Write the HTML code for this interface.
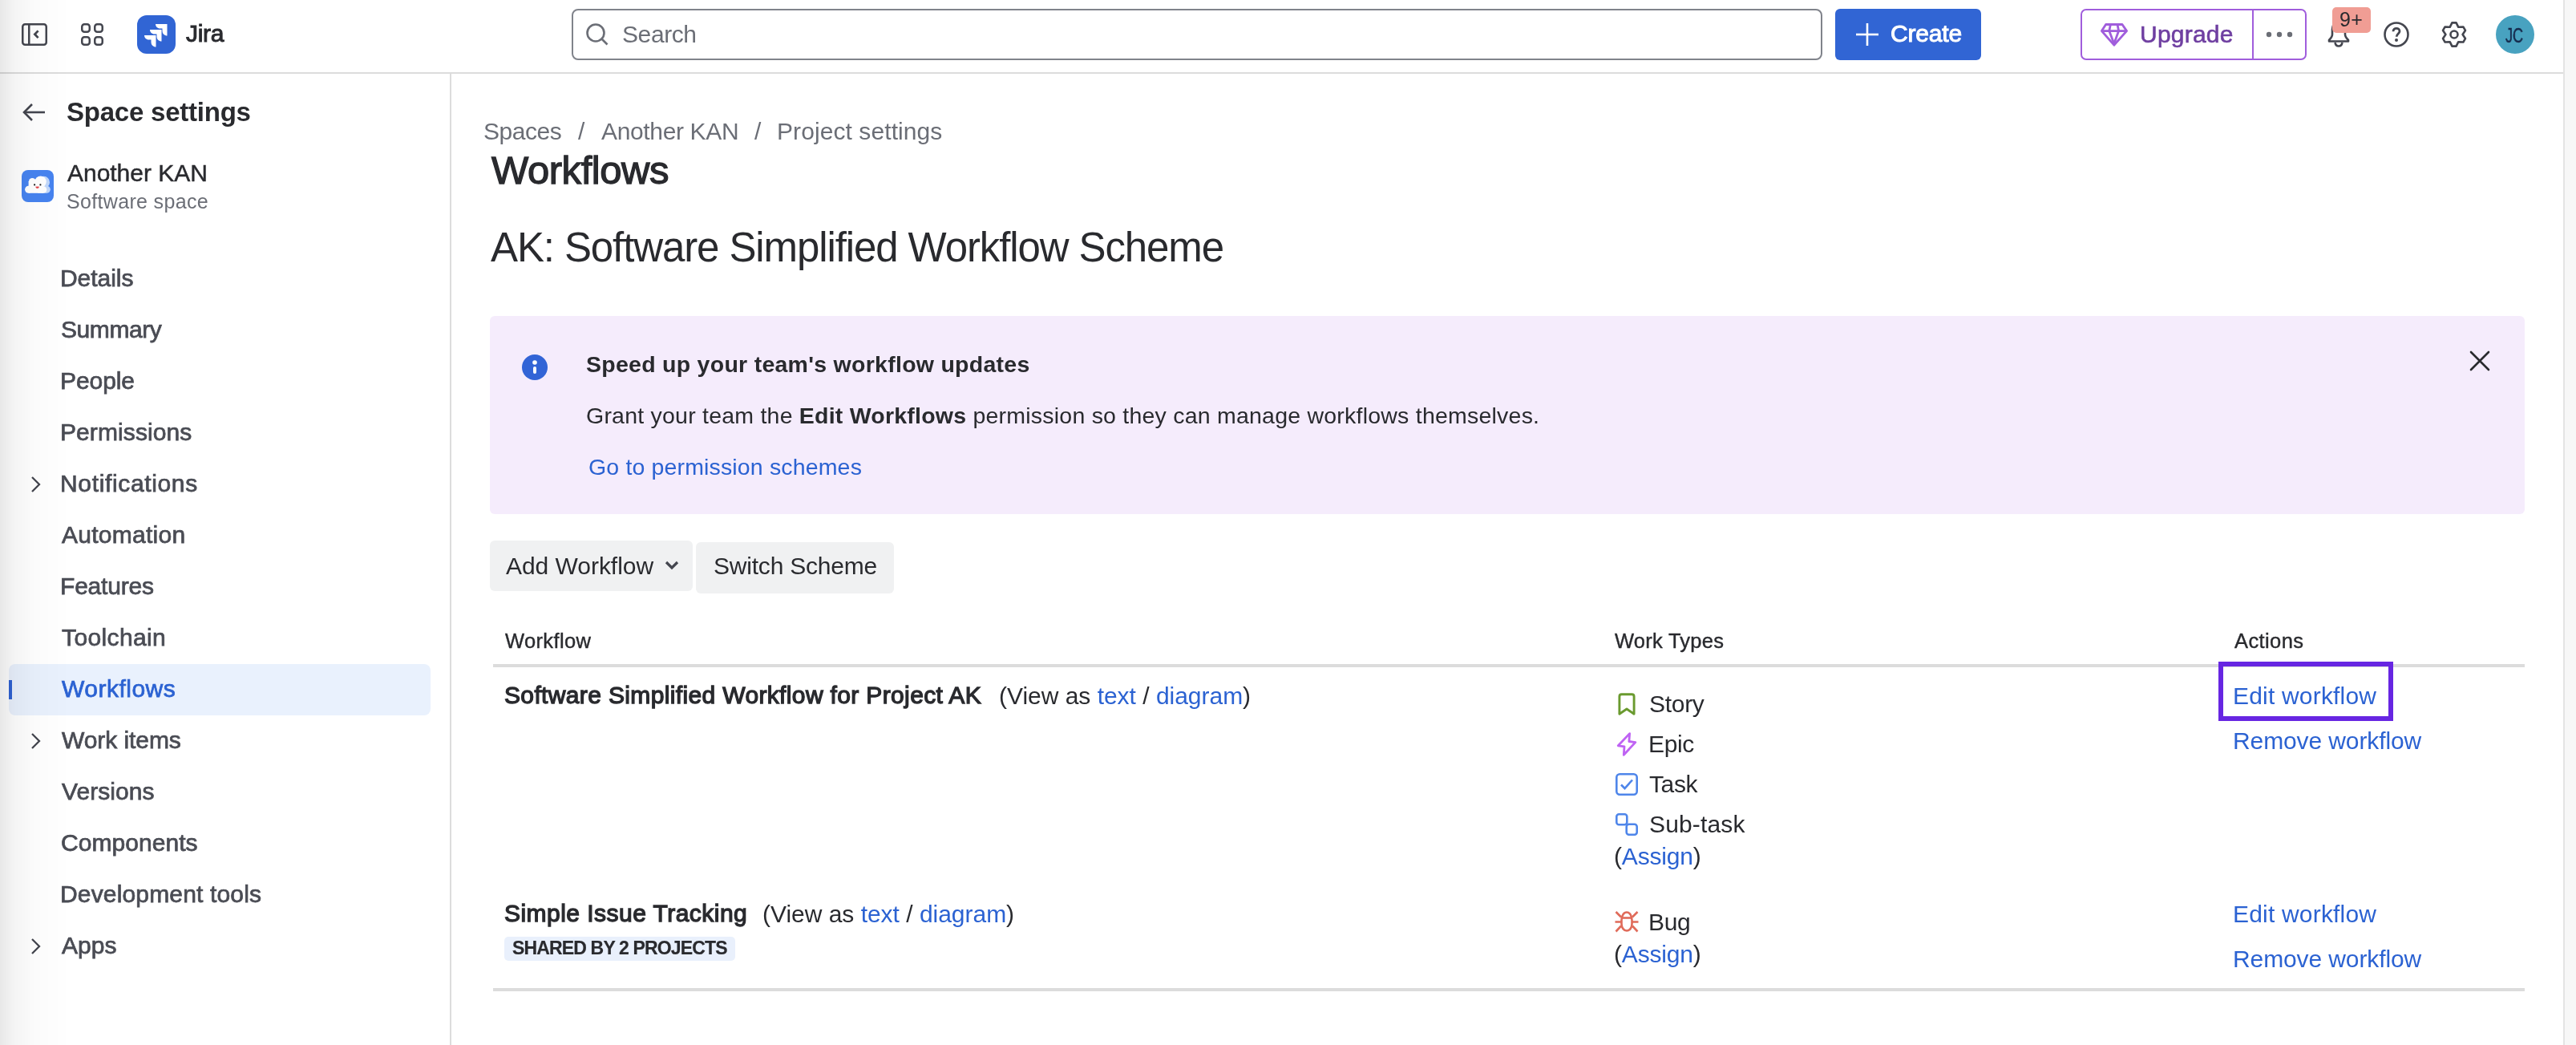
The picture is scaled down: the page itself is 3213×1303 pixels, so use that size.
<!DOCTYPE html>
<html><head><meta charset="utf-8"><title>Workflows</title>
<style>
html,body{margin:0;padding:0;width:3213px;height:1303px;overflow:hidden;background:#fff;}
body{position:relative;font-family:'Liberation Sans', sans-serif;}
.t{position:absolute;white-space:nowrap;will-change:transform;}
.t b{font-weight:700;}
#shade{position:absolute;left:0;top:0;width:88px;height:1303px;background:linear-gradient(to right, rgba(0,0,0,0.09), rgba(0,0,0,0.045) 20%, rgba(0,0,0,0.015) 50%, rgba(0,0,0,0) 100%);pointer-events:none;}
</style></head><body>
<div style="position:absolute;left:0;top:90px;width:3197px;height:2px;background:#dcdcdc"></div>
<svg style="position:absolute;left:25px;top:27px" width="36" height="32" viewBox="0 0 36 32">
<rect x="3.25" y="3.25" width="29.5" height="25.5" rx="3" fill="none" stroke="#44464f" stroke-width="2.5"/>
<line x1="11.25" y1="3" x2="11.25" y2="29" stroke="#44464f" stroke-width="2.5"/>
<polyline points="22.6,11.4 18.4,15.75 22.6,20.1" fill="none" stroke="#44464f" stroke-width="2.8" stroke-linecap="butt" stroke-linejoin="miter"/>
</svg>
<svg style="position:absolute;left:99px;top:27px" width="32" height="32" viewBox="0 0 32 32">
<g fill="none" stroke="#44464f" stroke-width="2.5">
<rect x="3.25" y="3.25" width="9.5" height="9.5" rx="3"/><rect x="19.25" y="3.25" width="9.5" height="9.5" rx="3"/>
<rect x="3.25" y="19.25" width="9.5" height="9.5" rx="3"/><rect x="19.25" y="19.25" width="9.5" height="9.5" rx="3"/>
</g></svg>
<svg style="position:absolute;left:171px;top:19px" width="48" height="48" viewBox="0 0 48 48">
<rect width="48" height="48" rx="12" fill="#3165d4"/>
<g fill="#fff">
<path d="M23 11 H37.5 V25.5 C34 25.5 31.5 23 31.5 19.5 V16.5 H28.5 C25.5 16.5 23 14 23 11 Z"/>
<path d="M16 18 H30.5 V32.5 C27 32.5 24.5 30 24.5 26.5 V23.5 H21.5 C18.5 23.5 16 21 16 18 Z"/>
<path d="M9 25 H23.5 V39.5 C20 39.5 17.5 37 17.5 33.5 V30.5 H14.5 C11.5 30.5 9 28 9 25 Z"/>
</g></svg>
<div class="t" style="left:232.00px;top:27px;font-size:30px;line-height:30px;color:#292a2e;letter-spacing:-0.333px;-webkit-text-stroke:1.0px #292a2e;">Jira</div>
<div style="position:absolute;left:713px;top:11px;width:1556px;height:60px;border:2px solid #80838b;border-radius:8px"></div>
<svg style="position:absolute;left:729px;top:27px" width="32" height="32" viewBox="0 0 32 32">
<circle cx="14" cy="14" r="10.5" fill="none" stroke="#6b6e76" stroke-width="2.6"/>
<line x1="21.5" y1="21.5" x2="28.5" y2="28.5" stroke="#6b6e76" stroke-width="2.6"/>
</svg>
<div class="t" style="left:776.00px;top:28px;font-size:30px;line-height:30px;color:#6b6e76;letter-spacing:-0.400px;">Search</div>
<div style="position:absolute;left:2289px;top:11px;width:182px;height:64px;background:#3165d4;border-radius:6px"></div>
<svg style="position:absolute;left:2313px;top:27px" width="32" height="32" viewBox="0 0 32 32">
<line x1="16" y1="2" x2="16" y2="30" stroke="#fff" stroke-width="2.6"/><line x1="2" y1="16" x2="30" y2="16" stroke="#fff" stroke-width="2.6"/>
</svg>
<div class="t" style="left:2357.50px;top:27px;font-size:30px;line-height:30px;color:#ffffff;letter-spacing:-0.180px;-webkit-text-stroke:1.0px #ffffff;">Create</div>
<div style="position:absolute;left:2595px;top:11px;width:278px;height:60px;border:2px solid #a05ddc;border-radius:7px"></div>
<div style="position:absolute;left:2809px;top:11px;width:2px;height:64px;background:#a05ddc"></div>
<svg style="position:absolute;left:2619px;top:27px" width="36" height="32" viewBox="0 0 36 32">
<g fill="none" stroke="#a05ddc" stroke-width="2.8" stroke-linejoin="round">
<path d="M7.6 3.5 H28 L33.6 11.6 L17.8 29.2 L2.4 11.6 Z"/><path d="M2.4 11.6 H33.6"/><path d="M13.4 3.5 L11.8 11.6 L17.8 27.5 L23.6 11.6 L22 3.5"/>
</g></svg>
<div class="t" style="left:2668.60px;top:28px;font-size:30px;line-height:30px;color:#6f3fa1;letter-spacing:0.233px;-webkit-text-stroke:0.6px #6f3fa1;">Upgrade</div>
<svg style="position:absolute;left:2822px;top:36px" width="40" height="14" viewBox="0 0 40 14">
<circle cx="8" cy="7" r="3.2" fill="#6b6e76"/><circle cx="21" cy="7" r="3.2" fill="#6b6e76"/><circle cx="34" cy="7" r="3.2" fill="#6b6e76"/>
</svg>
<svg style="position:absolute;left:2901px;top:22px" width="32" height="38" viewBox="0 0 32 38">
<path d="M16 5.5 C11 5.5 8 9.5 8 14.5 V21 C8 23.5 6.5 25.5 4 28 V29.5 H28 V28 C25.5 25.5 24 23.5 24 21 V14.5 C24 9.5 21 5.5 16 5.5 Z" fill="none" stroke="#44464f" stroke-width="2.6" stroke-linejoin="round"/>
<path d="M11.5 31 C12 34 14 35.5 16 35.5 C18 35.5 20 34 20.5 31" fill="none" stroke="#44464f" stroke-width="2.6"/>
</svg>
<div style="position:absolute;left:2909px;top:9px;width:48px;height:32px;background:#f09d94;border-radius:5px"></div>
<div class="t" style="left:2917.60px;top:12px;font-size:25px;line-height:25px;color:#292a2e;letter-spacing:0.400px;">9+</div>
<svg style="position:absolute;left:2971px;top:25px" width="36" height="36" viewBox="0 0 36 36">
<circle cx="18" cy="18" r="14.5" fill="none" stroke="#44464f" stroke-width="2.6"/>
<path d="M14 14.2 C14 11.8 15.8 10.3 18 10.3 C20.3 10.3 22 11.9 22 14 C22 16.9 18.2 17.1 18.2 20.7" fill="none" stroke="#44464f" stroke-width="2.8"/>
<circle cx="18" cy="24.9" r="2" fill="#44464f"/>
</svg>
<svg style="position:absolute;left:3043px;top:25px" width="36" height="36" viewBox="0 0 36 36">
<path d="M15.40 3.40 L20.60 3.40 L23.30 8.82 L29.34 8.45 L31.94 12.95 L28.60 18.00 L31.94 23.05 L29.34 27.55 L23.30 27.18 L20.60 32.60 L15.40 32.60 L12.70 27.18 L6.66 27.55 L4.06 23.05 L7.40 18.00 L4.06 12.95 L6.66 8.45 L12.70 8.82 Z" fill="none" stroke="#44464f" stroke-width="2.6" stroke-linejoin="round"/>
<circle cx="18" cy="18" r="4.5" fill="none" stroke="#44464f" stroke-width="2.6"/>
</svg>
<div style="position:absolute;left:3113px;top:19px;width:48px;height:48px;border-radius:50%;background:#48a2c0"></div>
<div class="t " style="left:3125px;top:32px;font-size:25px;line-height:25px;color:#172b4d;transform:scaleX(0.72);transform-origin:0 0;-webkit-text-stroke:0.5px #172b4d;">JC</div>
<div style="position:absolute;left:3197px;top:0;width:2px;height:1303px;background:#e4e4e4"></div>
<div style="position:absolute;left:3199px;top:0;width:14px;height:1303px;background:#f7f7f7"></div>
<div style="position:absolute;left:561px;top:92px;width:2px;height:1211px;background:#dcdcdc"></div>
<svg style="position:absolute;left:27px;top:126px" width="32" height="28" viewBox="0 0 32 28">
<path d="M4 14 H29" stroke="#44464f" stroke-width="2.6"/><polyline points="13,4 3,14 13,24" fill="none" stroke="#44464f" stroke-width="2.6" stroke-linejoin="miter"/>
</svg>
<div class="t" style="left:83.00px;top:123px;font-size:33px;line-height:33px;color:#292a2e;font-weight:700;letter-spacing:-0.231px;">Space settings</div>
<svg style="position:absolute;left:27px;top:212px" width="40" height="40" viewBox="0 0 40 40">
<rect width="40" height="40" rx="8" fill="#4784f0"/>
<g fill="#c3d9fb"><circle cx="27.6" cy="15.2" r="7.4"/><circle cx="31.3" cy="24.3" r="4.5"/><rect x="20" y="19.5" width="11.5" height="9.3"/></g>
<g fill="#fff"><circle cx="13.3" cy="14.3" r="4.4"/><circle cx="23.6" cy="14.6" r="7.2"/><circle cx="8.6" cy="24.3" r="4.5"/><circle cx="27" cy="24.5" r="4.3"/><rect x="8.6" y="19.8" width="18.4" height="9"/><rect x="8.6" y="14" width="10" height="10"/></g>
<circle cx="16.1" cy="18.4" r="1.1" fill="#222"/><circle cx="23.4" cy="18.4" r="1.1" fill="#222"/>
<path d="M17.2 20.7 Q19.6 20.1 22 20.7 Q21.5 23 19.6 23 Q17.7 23 17.2 20.7 Z" fill="#e5484d"/>
</svg>
<div class="t" style="left:84.00px;top:201px;font-size:30px;line-height:30px;color:#292a2e;letter-spacing:-0.030px;-webkit-text-stroke:0.45px #292a2e;">Another KAN</div>
<div class="t" style="left:83.00px;top:239px;font-size:25px;line-height:25px;color:#6b6e76;letter-spacing:0.331px;">Software space</div>
<div class="t" style="left:74.50px;top:332px;font-size:30px;line-height:30px;color:#4a4c54;letter-spacing:-0.042px;-webkit-text-stroke:0.75px #4a4c54;">Details</div>
<div class="t" style="left:75.50px;top:396px;font-size:30px;line-height:30px;color:#4a4c54;letter-spacing:-0.433px;-webkit-text-stroke:0.75px #4a4c54;">Summary</div>
<div class="t" style="left:74.50px;top:460px;font-size:30px;line-height:30px;color:#4a4c54;letter-spacing:-0.080px;-webkit-text-stroke:0.75px #4a4c54;">People</div>
<div class="t" style="left:74.50px;top:524px;font-size:30px;line-height:30px;color:#4a4c54;letter-spacing:0.090px;-webkit-text-stroke:0.75px #4a4c54;">Permissions</div>
<div class="t" style="left:74.50px;top:588px;font-size:30px;line-height:30px;color:#4a4c54;letter-spacing:0.650px;-webkit-text-stroke:0.75px #4a4c54;">Notifications</div>
<svg style="position:absolute;left:36px;top:593px" width="18" height="22" viewBox="0 0 18 22">
<polyline points="4,2 13,11 4,20" fill="none" stroke="#44464f" stroke-width="2.3"/></svg>
<div class="t" style="left:76.50px;top:652px;font-size:30px;line-height:30px;color:#4a4c54;letter-spacing:0.267px;-webkit-text-stroke:0.75px #4a4c54;">Automation</div>
<div class="t" style="left:74.50px;top:716px;font-size:30px;line-height:30px;color:#4a4c54;letter-spacing:-0.200px;-webkit-text-stroke:0.75px #4a4c54;">Features</div>
<div class="t" style="left:76.50px;top:780px;font-size:30px;line-height:30px;color:#4a4c54;letter-spacing:0.375px;-webkit-text-stroke:0.75px #4a4c54;">Toolchain</div>
<div style="position:absolute;left:11px;top:828px;width:526px;height:64px;background:#e9f1fd;border-radius:8px"></div>
<div style="position:absolute;left:11px;top:848px;width:4px;height:24px;background:#2f62d3"></div>
<div class="t" style="left:76.50px;top:844px;font-size:30px;line-height:30px;color:#2b62d2;letter-spacing:0.488px;-webkit-text-stroke:0.75px #2b62d2;">Workflows</div>
<div class="t" style="left:76.50px;top:908px;font-size:30px;line-height:30px;color:#4a4c54;letter-spacing:-0.067px;-webkit-text-stroke:0.75px #4a4c54;">Work items</div>
<svg style="position:absolute;left:36px;top:913px" width="18" height="22" viewBox="0 0 18 22">
<polyline points="4,2 13,11 4,20" fill="none" stroke="#44464f" stroke-width="2.3"/></svg>
<div class="t" style="left:76.50px;top:972px;font-size:30px;line-height:30px;color:#4a4c54;letter-spacing:0.071px;-webkit-text-stroke:0.75px #4a4c54;">Versions</div>
<div class="t" style="left:75.50px;top:1036px;font-size:30px;line-height:30px;color:#4a4c54;letter-spacing:0.056px;-webkit-text-stroke:0.75px #4a4c54;">Components</div>
<div class="t" style="left:74.50px;top:1100px;font-size:30px;line-height:30px;color:#4a4c54;letter-spacing:0.156px;-webkit-text-stroke:0.75px #4a4c54;">Development tools</div>
<div class="t" style="left:76.50px;top:1164px;font-size:30px;line-height:30px;color:#4a4c54;letter-spacing:0.067px;-webkit-text-stroke:0.75px #4a4c54;">Apps</div>
<svg style="position:absolute;left:36px;top:1169px" width="18" height="22" viewBox="0 0 18 22">
<polyline points="4,2 13,11 4,20" fill="none" stroke="#44464f" stroke-width="2.3"/></svg>
<div class="t" style="left:603.25px;top:149px;font-size:30px;line-height:30px;color:#6b6e76;letter-spacing:-0.450px;">Spaces</div>
<div class="t" style="left:721.00px;top:149px;font-size:30px;line-height:30px;color:#6b6e76;">/</div>
<div class="t" style="left:750.00px;top:149px;font-size:30px;line-height:30px;color:#6b6e76;letter-spacing:-0.350px;">Another KAN</div>
<div class="t" style="left:941.00px;top:149px;font-size:30px;line-height:30px;color:#6b6e76;">/</div>
<div class="t" style="left:968.50px;top:149px;font-size:30px;line-height:30px;color:#6b6e76;letter-spacing:0.083px;">Project settings</div>
<div class="t" style="left:613.00px;top:188px;font-size:49px;line-height:49px;color:#292a2e;letter-spacing:-0.438px;-webkit-text-stroke:1.3px #292a2e;">Workflows</div>
<div class="t" style="left:611.70px;top:283px;font-size:51px;line-height:51px;color:#292a2e;letter-spacing:-1.105px;">AK: Software Simplified Workflow Scheme</div>
<div style="position:absolute;left:611px;top:394px;width:2538px;height:247px;background:#f5ecfc;border-radius:6px"></div>
<svg style="position:absolute;left:651px;top:442px" width="32" height="32" viewBox="0 0 32 32">
<circle cx="16" cy="16" r="16" fill="#3264d6"/><circle cx="16" cy="10" r="2.8" fill="#fff"/><rect x="14" y="15" width="4" height="9" rx="2" fill="#fff"/>
</svg>
<div class="t" style="left:731.00px;top:440px;font-size:28.5px;line-height:28.5px;color:#292a2e;font-weight:700;letter-spacing:0.269px;">Speed up your team's workflow updates</div>
<div class="t" style="left:731.00px;top:504px;font-size:28.5px;line-height:28.5px;color:#292a2e;letter-spacing:0.224px;">Grant your team the <b>Edit Workflows</b> permission so they can manage workflows themselves.</div>
<div class="t" style="left:733.50px;top:568px;font-size:28.5px;line-height:28.5px;color:#2b62d2;letter-spacing:0.152px;">Go to permission schemes</div>
<svg style="position:absolute;left:3079px;top:436px" width="28" height="28" viewBox="0 0 28 28">
<path d="M3 3 L25 25 M25 3 L3 25" stroke="#292a2e" stroke-width="2.6" stroke-linecap="round"/>
</svg>
<div style="position:absolute;left:611px;top:674px;width:253px;height:63px;background:#f0f1f2;border-radius:6px"></div>
<div class="t" style="left:631.40px;top:691px;font-size:30px;line-height:30px;color:#292a2e;letter-spacing:-0.036px;">Add Workflow</div>
<svg style="position:absolute;left:828px;top:697px" width="20" height="16" viewBox="0 0 20 16">
<polyline points="3,4 10,11 17,4" fill="none" stroke="#44464f" stroke-width="3.2"/></svg>
<div style="position:absolute;left:868px;top:676px;width:247px;height:64px;background:#f0f1f2;border-radius:6px"></div>
<div class="t" style="left:890.25px;top:691px;font-size:30px;line-height:30px;color:#292a2e;letter-spacing:-0.208px;">Switch Scheme</div>
<div class="t" style="left:630.00px;top:787px;font-size:25.5px;line-height:25.5px;color:#292a2e;letter-spacing:0.357px;-webkit-text-stroke:0.4px #292a2e;">Workflow</div>
<div class="t" style="left:2013.50px;top:787px;font-size:25.5px;line-height:25.5px;color:#292a2e;letter-spacing:0.256px;-webkit-text-stroke:0.4px #292a2e;">Work Types</div>
<div class="t" style="left:2786.60px;top:787px;font-size:25.5px;line-height:25.5px;color:#292a2e;letter-spacing:0.400px;-webkit-text-stroke:0.4px #292a2e;">Actions</div>
<div style="position:absolute;left:615px;top:828px;width:2534px;height:4px;background:#dcdcdc"></div>
<div style="position:absolute;left:615px;top:1232px;width:2534px;height:4px;background:#dcdcdc"></div>
<div class="t" style="left:629.00px;top:852px;font-size:30px;line-height:30px;color:#292a2e;letter-spacing:0.357px;-webkit-text-stroke:1.3px #292a2e;">Software Simplified Workflow for Project AK</div>
<div class="t" style="left:1245.50px;top:853px;font-size:30px;line-height:30px;color:#292a2e;letter-spacing:-0.022px;">(View as <span style="color:#2b62d2">text</span> / <span style="color:#2b62d2">diagram</span>)</div>
<div class="t" style="left:2785.40px;top:853px;font-size:30px;line-height:30px;color:#2b62d2;letter-spacing:0.192px;">Edit workflow</div>
<div class="t" style="left:2785.00px;top:909px;font-size:30px;line-height:30px;color:#2b62d2;letter-spacing:-0.107px;">Remove workflow</div>
<div style="position:absolute;left:2767px;top:825px;width:206px;height:62px;border:6px solid #6726e2"></div>
<svg style="position:absolute;left:2015px;top:864px" width="28" height="28" viewBox="0 0 28 28">
<path d="M4.9 4.4 Q4.9 1.7 7.6 1.7 H20.4 Q23.1 1.7 23.1 4.4 V26.2 L14 20 L4.9 26.2 Z" fill="none" stroke="#6a9a2f" stroke-width="2.9" stroke-linejoin="round"/></svg>
<div class="t" style="left:2057.00px;top:863px;font-size:30px;line-height:30px;color:#292a2e;letter-spacing:-0.300px;">Story</div>
<svg style="position:absolute;left:2015px;top:912px" width="28" height="32" viewBox="0 0 28 32">
<path d="M17.6 2.6 L3.3 17.8 L11 18.9 L10.3 29.3 L24.8 13.6 L16.9 12.5 Z" fill="none" stroke="#bf63f3" stroke-width="2.8" stroke-linejoin="round"/></svg>
<div class="t" style="left:2056.00px;top:913px;font-size:30px;line-height:30px;color:#292a2e;letter-spacing:-0.367px;">Epic</div>
<svg style="position:absolute;left:2015px;top:964px" width="28" height="28" viewBox="0 0 28 28">
<rect x="1.3" y="1.3" width="25.4" height="25.4" rx="4" fill="none" stroke="#4f86ea" stroke-width="2.6"/>
<polyline points="7,14.5 11.5,19 21,8.5" fill="none" stroke="#4f86ea" stroke-width="2.6"/></svg>
<div class="t" style="left:2057.00px;top:963px;font-size:30px;line-height:30px;color:#292a2e;letter-spacing:-0.400px;">Task</div>
<svg style="position:absolute;left:2015px;top:1014px" width="28" height="28" viewBox="0 0 28 28">
<rect x="1.3" y="1.3" width="13" height="13" rx="3" fill="none" stroke="#4f86ea" stroke-width="2.6"/>
<rect x="13.7" y="13.7" width="13" height="13" rx="3" fill="none" stroke="#4f86ea" stroke-width="2.6"/></svg>
<div class="t" style="left:2057.00px;top:1013px;font-size:30px;line-height:30px;color:#292a2e;letter-spacing:0.143px;">Sub-task</div>
<div class="t" style="left:2013.00px;top:1053px;font-size:30px;line-height:30px;color:#292a2e;letter-spacing:-0.179px;">(<span style="color:#2b62d2">Assign</span>)</div>
<div class="t" style="left:628.50px;top:1124px;font-size:30px;line-height:30px;color:#292a2e;letter-spacing:0.465px;-webkit-text-stroke:1.3px #292a2e;">Simple Issue Tracking</div>
<div class="t" style="left:950.50px;top:1125px;font-size:30px;line-height:30px;color:#292a2e;letter-spacing:-0.022px;">(View as <span style="color:#2b62d2">text</span> / <span style="color:#2b62d2">diagram</span>)</div>
<div style="position:absolute;left:629px;top:1168px;width:288px;height:30px;background:#e9f0fc;border-radius:5px"></div>
<div class="t" style="left:638.75px;top:1171px;font-size:23px;line-height:23px;color:#292a2e;font-weight:700;letter-spacing:-0.842px;-webkit-text-stroke:0.2px #292a2e;">SHARED BY 2 PROJECTS</div>
<svg style="position:absolute;left:2014px;top:1135px" width="30" height="28" viewBox="0 0 30 28">
<g fill="none" stroke="#e06b5a" stroke-width="2.6">
<path d="M8.5 12.5 C8.5 6.5 11.5 2.5 15 2.5 C18.5 2.5 21.5 6.5 21.5 12.5 V17 C21.5 22 18.5 25.5 15 25.5 C11.5 25.5 8.5 22 8.5 17 Z"/>
<path d="M9 9.5 H21"/><path d="M0.5 14.5 H8.5 M21.5 14.5 H29.5"/>
<path d="M1.5 2 L8 8.5 M28.5 2 L22 8.5 M1.5 26.5 L8 19.5 M28.5 26.5 L22 19.5"/>
</g></svg>
<div class="t" style="left:2056.30px;top:1135px;font-size:30px;line-height:30px;color:#292a2e;letter-spacing:-0.350px;">Bug</div>
<div class="t" style="left:2013.00px;top:1175px;font-size:30px;line-height:30px;color:#292a2e;letter-spacing:-0.179px;">(<span style="color:#2b62d2">Assign</span>)</div>
<div class="t" style="left:2785.40px;top:1125px;font-size:30px;line-height:30px;color:#2b62d2;letter-spacing:0.192px;">Edit workflow</div>
<div class="t" style="left:2785.00px;top:1181px;font-size:30px;line-height:30px;color:#2b62d2;letter-spacing:-0.107px;">Remove workflow</div>
<div id="shade"></div>
</body></html>
